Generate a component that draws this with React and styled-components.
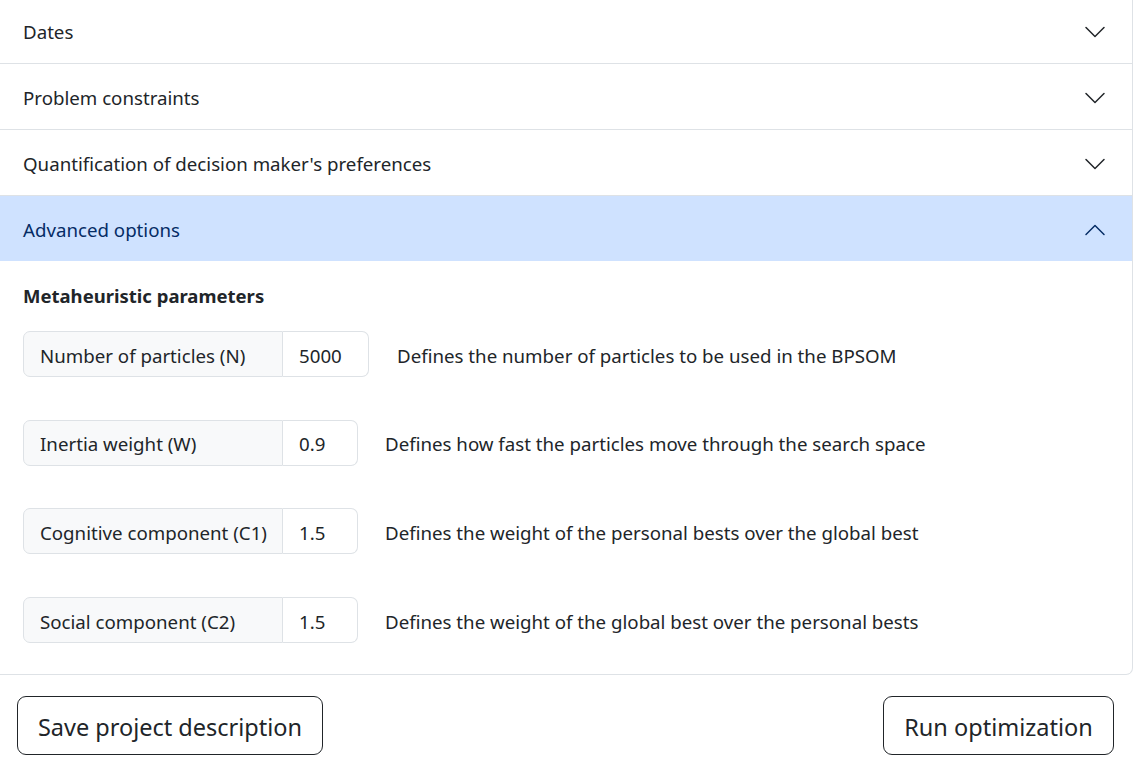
import React from 'react';
import styled, { createGlobalStyle } from 'styled-components';

const GlobalStyle = createGlobalStyle`
  body {
    margin: 0;
    background: #fff;
    font-family: "Noto Sans", "Open Sans", sans-serif;
    color: #212529;
  }
`

const Page = styled.div`
  width: 1134px;
`

const Accordion = styled.div`
  width: 1133px;
  box-sizing: border-box;
  margin-top: -3px;
  border: 1px solid #dee2e6;
  border-left: none;
  border-radius: 0 0 7px 0;
`

const Item = styled.div`
  border-bottom: ${props => props.last ? 'none' : '1px solid #dee2e6'};
`

const Header = styled.div`
  height: 65px;
  box-sizing: border-box;
  display: flex;
  align-items: center;
  justify-content: space-between;
  padding: 2px 25px 0 23px;
  font-size: 18.7px;
  background: ${props => props.active ? '#cfe2ff' : '#fff'};
  color: ${props => props.active ? '#052c65' : '#212529'};
  cursor: pointer;
  svg {
    display: block;
    width: 24px;
    height: 24px;
    transform: ${props => props.active ? 'rotate(180deg)' : 'none'};
  }
`

const Body = styled.div`
  padding: 21px 23px 31px;
`

const Heading = styled.div`
  font-weight: 700;
  font-size: 18.5px;
  line-height: 28px;
  margin-bottom: 21px;
`

const Row = styled.div`
  display: flex;
  align-items: center;
  margin-bottom: ${props => props.last ? '0' : '42.7px'};
`

const Label = styled.div`
  width: 260px;
  height: 46px;
  box-sizing: border-box;
  display: flex;
  align-items: center;
  padding: 2px 0 0 16px;
  background: #f8f9fa;
  border: 1px solid #dee2e6;
  border-radius: 7px 0 0 7px;
  font-size: 18.7px;
`

const Input = styled.input`
  width: ${props => props.w}px;
  height: 46px;
  box-sizing: border-box;
  margin: 0;
  padding: 2px 0 0 16px;
  border: 1px solid #dee2e6;
  border-left: none;
  border-radius: 0 7px 7px 0;
  font-family: inherit;
  font-size: 18.7px;
  color: #212529;
  background: #fff;
  outline: none;
`

const Description = styled.div`
  margin-left: ${props => props.gap}px;
  padding-top: 2px;
  font-size: 18.7px;
`

const Actions = styled.div`
  display: flex;
  justify-content: space-between;
  padding: 21px 20px 0 17px;
`

const Button = styled.button`
  width: ${props => props.w}px;
  height: 59px;
  box-sizing: border-box;
  padding: 2px 0 0;
  background: #fff;
  border: 1px solid #212529;
  border-radius: 9px;
  font-family: inherit;
  font-size: 23.5px;
  color: #212529;
  cursor: pointer;
`

const Chevron = ({ color }) => (
  <svg viewBox="0 0 16 16" fill={color}>
    <path fillRule="evenodd" d="M1.646 4.646a.5.5 0 0 1 .708 0L8 10.293l5.646-5.647a.5.5 0 0 1 .708.708l-6 6a.5.5 0 0 1-.708 0l-6-6a.5.5 0 0 1 0-.708z" />
  </svg>
)

const sections = ['Dates', 'Problem constraints', "Quantification of decision maker's preferences"]

const params = [
  { label: 'Number of particles (N)', value: '5000', w: 86, gap: 28, text: 'Defines the number of particles to be used in the BPSOM' },
  { label: 'Inertia weight (W)', value: '0.9', w: 75, gap: 27, text: 'Defines how fast the particles move through the search space' },
  { label: 'Cognitive component (C1)', value: '1.5', w: 75, gap: 27, text: 'Defines the weight of the personal bests over the global best' },
  { label: 'Social component (C2)', value: '1.5', w: 75, gap: 27, text: 'Defines the weight of the global best over the personal bests' },
]

export default function App() {
  return (
    <Page>
      <GlobalStyle />
      <Accordion>
        {sections.map(title => (
          <Item key={title}>
            <Header>
              <span>{title}</span>
              <Chevron color="#212529" />
            </Header>
          </Item>
        ))}
        <Item last>
          <Header active>
            <span>Advanced options</span>
            <Chevron color="#052c65" />
          </Header>
          <Body>
            <Heading>Metaheuristic parameters</Heading>
            {params.map((p, i) => (
              <Row key={p.label} last={i === params.length - 1}>
                <Label>{p.label}</Label>
                <Input w={p.w} defaultValue={p.value} />
                <Description gap={p.gap}>{p.text}</Description>
              </Row>
            ))}
          </Body>
        </Item>
      </Accordion>
      <Actions>
        <Button w={306}>Save project description</Button>
        <Button w={231}>Run optimization</Button>
      </Actions>
    </Page>
  )
}
